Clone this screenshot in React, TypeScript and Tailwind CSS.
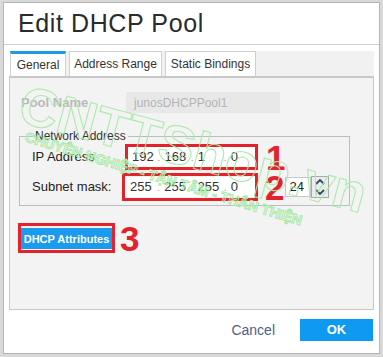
import React from "react";

const font = { fontFamily: '"Liberation Sans", Arial, sans-serif' };

function IpField({ parts, boxClass, firstW }: { parts: string[]; boxClass: string; firstW: string }) {
  return (
    <div className={`border-[3px] border-[#e3222b] ${boxClass}`}>
      <div className="flex h-[20px] items-center bg-white text-[13px] text-[#333]">
        {parts.map((p, i) =>
          i === 0 ? (
            <div key={i} className={`${firstW} flex items-center`}>{p}</div>
          ) : (
            <div key={i} className="flex w-[38px] items-center">
              <span className="ml-[2px] w-[4px] text-[10px] text-[#999]">.</span>
              <span className="ml-[3px]">{p}</span>
            </div>
          )
        )}
      </div>
    </div>
  );
}

function Mark({ n, cls }: { n: string; cls: string }) {
  return <span className={`text-[35px] font-bold text-[#e3222b] ${cls}`}>{n}</span>;
}

export default function App() {
  return (
    <div style={font} className="h-[357px] w-[383px] overflow-hidden bg-[#d9d9d9] pl-[3px] pt-[2px]">
      <div className="relative flex h-[352px] w-[377px] flex-col border border-[#b5b5b5] bg-white">
        {/* header */}
        <div className="flex h-[42px] items-center border-b border-[#cfcfcf] pl-[14px]">
          <h1 className="text-[25px] leading-none tracking-[0.6px] text-[#2b2b2b]">Edit DHCP Pool</h1>
        </div>

        <div className="px-[5px] pt-[6px]">
          {/* tabs */}
          <div className="ml-[1px] flex h-[25px] items-end gap-[3px] bg-[#f1f1f1] text-[12px] text-[#333]">
            <div className="flex h-[25px] w-[56px] items-center justify-center border-x border-[#cfcfcf] border-t-[3px] border-t-[#1e9be0] bg-white">General</div>
            <div className="flex h-[25px] w-[93px] items-center justify-center border-x border-t border-[#cfcfcf] bg-white">Address Range</div>
            <div className="flex h-[25px] w-[91px] items-center justify-center border-x border-t border-[#cfcfcf] bg-white">Static Bindings</div>
          </div>

          {/* panel */}
          <div className="h-[234px] border border-t-2 border-[#c8c8c8] bg-[#f3f3f3] pl-[9px] pt-[14px]">
            <div className="flex items-center">
              <span className="ml-[2px] w-[105px] text-[13px] font-bold text-[#b9b9b9]">Pool Name</span>
              <div className="flex h-[21px] w-[154px] items-center bg-[#e8e8e8] pl-[8px] text-[12px] text-[#b4b4b4]">junosDHCPPool1</div>
            </div>

            <fieldset className="mt-[16px] h-[77px] w-[331px] border border-[#bdbdbd] pl-[12px] pr-0">
              <legend className="ml-[1px] px-[2px] text-[12px] leading-[14px] text-[#333]">Network Address</legend>
              <div className="mt-[1px] flex h-[26px] items-center">
                <span className="w-[93px] text-[13px] text-[#222]">IP Address</span>
                <IpField parts={["192", "168", "1", "0"]} boxClass="w-[133px]" firstW="w-[31px] pl-[4px]" />
                <Mark n="1" cls="ml-[8px] h-[26px] leading-[28px]" />
              </div>
              <div className="mt-[3px] flex h-[28px] items-center">
                <span className="w-[90px] text-[13px] text-[#222]">Subnet mask:</span>
                <IpField parts={["255", "255", "255", "0"]} boxClass="w-[136px] py-[1px]" firstW="w-[34px] pl-[5px]" />
                <Mark n="2" cls="ml-[7px] h-[28px] leading-[30px]" />
                <div className="ml-[1px] flex h-[20px] w-[26px] items-center border border-[#c8c8c8] bg-white pl-[3px] text-[13px] text-[#222]">24</div>
                <div className="flex h-[22px] w-[18px] flex-col border border-[#a9a9a9] bg-[#ececec]">
                  <svg viewBox="0 0 16 10" className="h-[10px] w-[16px]">
                    <path d="M4 7 L8 3 L12 7" fill="none" stroke="#2f4a68" strokeWidth="1.8" />
                  </svg>
                  <svg viewBox="0 0 16 10" className="h-[10px] w-[16px]">
                    <path d="M4 3 L8 7 L12 3" fill="none" stroke="#2f4a68" strokeWidth="1.8" />
                  </svg>
                </div>
              </div>
            </fieldset>

            <div className="-ml-[1px] mt-[18px] flex h-[27px] items-center">
              <div className="border-[3px] border-[#e3222b]">
                <button className="h-[21px] w-[91px] bg-[#1a9bef] text-[11px] font-bold text-white">DHCP Attributes</button>
              </div>
              <Mark n="3" cls="ml-[5px] h-[27px] leading-[30px]" />
            </div>
          </div>
        </div>

        {/* footer */}
        <div className="flex flex-1 items-center justify-end pb-[3px] pr-[6px]">
          <span className="mr-[25px] text-[14px] text-[#4d5f88]">Cancel</span>
          <button className="h-[22px] w-[73px] bg-[#0d9af0] text-[13px] font-bold text-white">OK</button>
        </div>

        {/* watermark */}
        <svg className="pointer-events-none absolute left-0 top-0" width="377" height="352" viewBox="0 0 377 352">
          <g fill="none" stroke="#a8eaa8" strokeWidth="1" fontWeight="bold" fontFamily="Liberation Sans, Arial, sans-serif">
            <text transform="translate(12 118) rotate(15)" fontSize="54">CNTTShop.vn</text>
            <text transform="translate(20 138) rotate(17)" fontSize="14">CHUYÊN NGHIỆP - TẬN TÂM - THÂN THIỆN</text>
          </g>
        </svg>
      </div>
    </div>
  );
}
